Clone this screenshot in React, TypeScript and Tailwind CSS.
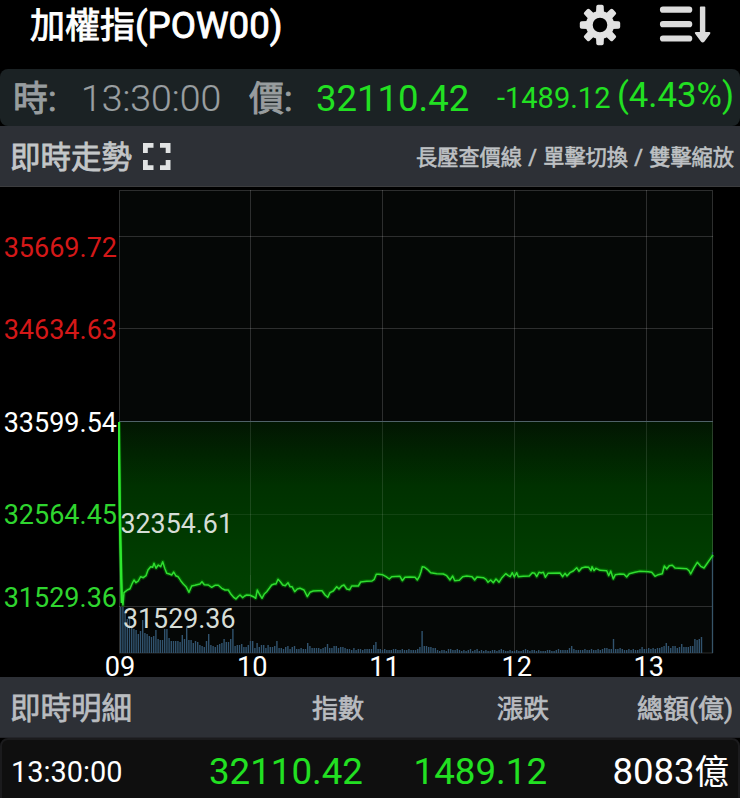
import React from 'react';

const CHART_LEFT = 119;
const CHART_RIGHT = 713;
const CHART_BOTTOM = 653;
const PREV_CLOSE_Y = 421.5;
const MINUTE_WIDTH = 2.2;

const hours = ['09', '10', '11', '12', '13'];

// price line, one block per part of the session, in thirds of a pixel from the origin
const priceParts = [
  {
    origin: [100, 410],
    points: [
      [57, 36], [59, 300], [63, 480], [66, 570], [69, 585], [72, 548], [82, 540],
      [90, 536], [97, 520], [102, 510], [108, 518], [115, 513], [122, 500],
      [130, 503], [138, 497], [144, 480], [152, 470], [158, 472], [162, 460],
      [168, 475], [175, 465], [182, 470], [188, 455], [194, 475], [200, 490],
      [208, 492], [215, 495], [221, 486], [227, 497], [234, 500], [242, 512],
      [250, 522], [258, 530], [267, 547], [275, 528], [285, 526], [300, 522],
      [306, 515], [313, 524], [325, 525], [335, 532], [345, 526], [355, 526],
      [365, 535], [375, 540], [385, 540], [393, 553], [402, 563], [408, 567],
      [414, 560], [420, 555], [428, 563], [434, 558], [440, 555], [450, 556],
      [460, 560], [467, 565], [472, 540], [478, 552], [486, 565], [493, 552],
      [500, 545], [508, 535], [515, 525], [523, 522], [528, 522], [534, 508],
      [541, 515], [548, 525], [556, 527], [564, 518], [570, 530], [576, 530],
      [584, 545], [592, 537], [600, 535], [612, 540], [622, 560], [630, 547],
      [640, 543], [655, 542],
    ],
  },
  {
    origin: [300, 530],
    points: [
      [66, 182], [75, 195], [83, 202], [90, 188], [100, 183], [110, 170],
      [117, 177], [125, 168], [132, 165], [140, 177], [149, 179], [155, 168],
      [165, 168], [175, 168], [182, 156], [200, 154], [216, 153], [223, 148],
      [229, 133], [236, 133], [247, 134], [258, 140], [268, 147], [275, 140],
      [300, 139], [307, 152], [315, 142], [330, 141], [345, 142], [352, 150],
      [358, 140], [363, 125], [367, 110], [374, 112], [382, 118], [392, 128],
      [410, 131], [430, 132], [440, 137], [450, 150], [458, 138], [464, 152],
      [478, 151], [488, 140], [500, 138], [516, 140], [524, 150], [531, 141],
      [550, 143], [558, 148], [564, 157], [572, 150], [580, 158], [588, 147],
      [597, 157],
    ],
  },
  {
    origin: [500, 530],
    points: [
      [6, 143], [17, 131], [25, 137], [31, 140], [37, 128], [43, 141],
      [50, 128], [55, 140], [70, 139], [88, 138], [97, 128], [104, 130],
      [110, 140], [117, 127], [124, 129], [130, 127], [136, 142], [144, 130],
      [180, 129], [188, 140], [195, 130], [201, 138], [210, 128], [220, 123],
      [230, 113], [237, 124], [245, 114], [256, 111], [266, 112], [273, 122],
      [276, 110], [282, 122], [288, 115], [300, 121], [320, 122], [326, 137],
      [332, 123], [340, 147], [346, 134], [360, 132], [372, 133], [380, 141],
      [388, 131], [405, 127], [420, 124], [445, 125], [455, 127], [465, 139],
      [475, 134], [487, 131], [493, 108], [500, 117], [508, 107], [517, 106],
      [525, 114], [560, 116], [567, 122], [572, 132], [582, 113], [592, 97],
      [602, 109], [612, 114], [622, 100], [632, 85], [639, 75],
    ],
  },
];

// volume per minute, as bar heights
const volumes = [
  46, 46, 40, 34, 36, 26, 24, 23, 19, 22, 33, 20, 19, 17, 16, 17, 23, 14, 13,
  13, 24, 24, 15, 12, 12, 12, 12, 11, 18, 14, 27, 13, 13, 10, 12, 11, 8, 7, 6,
  12, 19, 8, 7, 6, 8, 9, 10, 14, 11, 11, 14, 24, 7, 8, 8, 9, 6, 6, 8, 12, 12, 5,
  10, 6, 8, 8, 5, 8, 6, 6, 7, 12, 5, 5, 4, 6, 7, 4, 6, 7, 4, 4, 5, 4, 4, 10, 7,
  5, 5, 5, 5, 4, 5, 6, 9, 5, 5, 7, 7, 5, 6, 6, 5, 4, 4, 3, 5, 3, 4, 4, 3, 4, 4,
  4, 4, 8, 11, 4, 4, 3, 4, 3, 3, 3, 4, 4, 3, 3, 4, 3, 3, 4, 3, 3, 3, 4, 6, 22, 7,
  7, 6, 6, 5, 5, 3, 2, 3, 3, 2, 4, 4, 3, 3, 4, 3, 2, 3, 2, 3, 4, 2, 3, 4, 2, 3,
  2, 3, 2, 2, 3, 3, 2, 3, 4, 3, 2, 2, 3, 2, 2, 3, 2, 2, 3, 4, 3, 2, 3, 3, 2, 3,
  2, 2, 2, 3, 3, 2, 2, 3, 4, 3, 3, 3, 3, 5, 7, 4, 3, 3, 3, 3, 4, 3, 3, 4, 3, 3,
  4, 3, 4, 5, 5, 4, 4, 14, 4, 4, 5, 4, 3, 3, 4, 3, 4, 3, 3, 4, 6, 4, 4, 5, 4, 5,
  4, 5, 5, 6, 7, 10, 7, 5, 7, 7, 5, 6, 9, 6, 6, 6, 7, 7, 14, 13, 14, 16,
];

const prices = priceParts.flatMap(part =>
  part.points.map(([x, y]) => [
    part.origin[0] + x / 3,
    part.origin[1] + y / 3,
  ]),
);
const line = prices
  .map(([x, y]) => `${x.toFixed(1)},${y.toFixed(1)}`)
  .join(' ');
const area = `${CHART_LEFT},${PREV_CLOSE_Y} ${line} ${CHART_RIGHT},${PREV_CLOSE_Y}`;

const GearIcon: React.FC = () => (
  <svg className="size-[42px]" viewBox="-21 -21 42 42" fill="#e2e2e2">
    <circle r="10.7" fill="none" stroke="#e2e2e2" strokeWidth="6.8" />
    {[0, 45, 90, 135, 180, 225, 270, 315].map(angle => (
      <path
        key={angle}
        d="M-4 -12 L-3.7 -18.4 Q-3.6 -20.2 -2 -20.2 H2 Q3.6 -20.2 3.7 -18.4 L4 -12 Z"
        transform={`rotate(${angle})`}
      />
    ))}
  </svg>
);

const SortIcon: React.FC = () => (
  <svg className="h-[42px] w-[52px]" viewBox="0 0 52 42" fill="#dcdcdc">
    <path
      d="M4 5.7 H30.2 M4 20.2 H30.2 M4 34.5 H30.2"
      stroke="#dcdcdc"
      strokeWidth="6.2"
      strokeLinecap="round"
    />
    <path d="M40.9 3.2 Q40.9 2.5 41.7 2.5 H45.5 Q46.3 2.5 46.3 3.3 V28 H50.3 Q52 28.3 51.2 29.8 L45.5 37.4 Q43.7 39.4 41.9 37.4 L36.1 29.8 Q35.1 28.3 36.9 28 H40.9 Z" />
  </svg>
);

const FullscreenIcon: React.FC = () => (
  <svg
    className="size-[29px]"
    viewBox="0 0 29 29"
    fill="none"
    stroke="#e1e3e4"
    strokeWidth="4.8"
  >
    <path d="M3.4 11 V3.4 H11.5 M18 3.4 H26.1 V11 M26.1 18 V25.6 H18 M11.5 25.6 H3.4 V18" />
  </svg>
);

const Chart: React.FC = () => (
  <svg
    className="col-start-2 row-start-1 h-[467px] w-[622px]"
    viewBox="118 187 622 467"
  >
    <defs>
      <linearGradient id="fall" x1="0" y1="0" x2="0" y2="1">
        <stop offset="0" stopColor="#021602" />
        <stop offset="0.35" stopColor="#003100" />
        <stop offset="0.75" stopColor="#003d00" />
        <stop offset="1" stopColor="#004200" />
      </linearGradient>
    </defs>
    <rect x="119" y="190" width="594" height="463" fill="#050706" />
    <polygon points={area} fill="url(#fall)" />
    <g fill="none" stroke="#ffffff" strokeOpacity="0.16" strokeWidth="1">
      <rect x="119.5" y="190.5" width="593" height="462.5" />
      <path d="M119 236.5 H713 M119 328.5 H713 M119 606.5 H713" />
      <path d="M119 514.5 H713" strokeOpacity="0.07" />
      {[250.5, 382.5, 514.5, 646.5].map(x => (
        <g key={x}>
          <path d={`M${x} 190 V421 M${x} 575 V653`} />
          <path d={`M${x} 421 V575`} strokeOpacity="0.11" />
        </g>
      ))}
    </g>
    <path d="M119 421.5 H713" stroke="#4f6268" />
    <g fill="#31536e">
      {volumes.map((v, i) => (
        <rect
          key={i}
          x={120 + i * MINUTE_WIDTH}
          y={CHART_BOTTOM - v}
          width="1.4"
          height={v}
        />
      ))}
    </g>
    <path d="M712.5 552 V653" stroke="#365468" strokeWidth="1.3" />
    <polyline
      points={line}
      fill="none"
      stroke="#00b800"
      strokeOpacity="0.3"
      strokeWidth="4"
      strokeLinejoin="round"
    />
    <polyline
      points={line}
      fill="none"
      stroke="#30dc30"
      strokeWidth="1.5"
      strokeLinejoin="round"
    />
    <path
      d="M118.8 422 L119.8 514 L121.8 603"
      fill="none"
      stroke="#2ee82e"
      strokeWidth="2.4"
    />
  </svg>
);

const App: React.FC = () => {
  return (
    <main className="h-[798px] w-[740px] overflow-hidden bg-black font-['Roboto','Noto_Sans_CJK_TC',sans-serif] whitespace-nowrap">
      <header className="flex h-[69px] items-start pl-[30px]">
        <h1 className="mt-[5px] text-[35px] leading-[42px] text-white [-webkit-text-stroke:0.9px]">
          加權指<span className="text-[36.7px]">(POW00)</span>
        </h1>
        <div className="mt-[3.5px] mr-[29px] ml-auto flex gap-[38px]">
          <GearIcon />
          <SortIcon />
        </div>
      </header>

      <section className="flex h-[57px] items-center rounded-[8px] bg-[#1b2224] text-[36.5px] leading-[57px]">
        <span className="mt-1 w-[67px] pl-[13px] text-[35px] text-[#989d9f] [-webkit-text-stroke:0.9px]">
          時:
        </span>
        <span className="mt-0.5 w-[182px] pl-[14px] text-[37.4px] font-light text-[#9a9fa1] [-webkit-text-stroke:0.2px]">
          13:30:00
        </span>
        <span className="mt-1 w-[67px] text-[35px] text-[#989d9f] [-webkit-text-stroke:0.9px]">
          價:
        </span>
        <span className="mt-px w-[181px] text-[#22e022]">32110.42</span>
        <span className="mt-0.5 w-[120px] text-[29px] text-[#22e022]">
          -1489.12
        </span>
        <span className="-mt-1 text-[34.7px] text-[#22e022]">(4.43%)</span>
      </section>

      <section className="flex h-[61px] items-center justify-between border-b border-[#3c3d3f] bg-[#2d3036] pr-[6px] pl-[10px]">
        <div className="flex items-center gap-[10px]">
          <h2 className="mt-[3px] text-[30.5px] text-[#c3c6c8] [-webkit-text-stroke:0.8px]">
            即時走勢
          </h2>
          <FullscreenIcon />
        </div>
        <p className="mt-[3px] text-[21.2px] text-[#bec1c4] [-webkit-text-stroke:0.6px] [word-spacing:1px]">
          長壓查價線 / 單擊切換 / 雙擊縮放
        </p>
      </section>

      <section className="grid h-[490px] grid-cols-[118px_622px] grid-rows-[467px_23px]">
        <div className="pr-px text-right text-[27px] leading-[32px]">
          <p className="mt-[45px] text-[#d41818]">35669.72</p>
          <p className="mt-[50px] text-[#d41818]">34634.63</p>
          <p className="mt-[61px] text-white">33599.54</p>
          <p className="mt-[60px] text-[#2fd52f]">32564.45</p>
          <p className="mt-[51px] text-[#2fd52f]">31529.36</p>
        </div>
        <Chart />
        <div className="z-10 col-start-2 row-start-1 text-[26.8px] leading-[32px] text-[#d6ddd6]">
          <p className="mt-[321px] ml-[2.5px]">32354.61</p>
          <p className="mt-[63px] ml-[5px]">31529.36</p>
        </div>
        <div className="col-start-2 -ml-[64px] flex text-[27.2px] leading-[27px] text-white">
          {hours.map(hour => (
            <span key={hour} className="w-[132.2px] text-center">
              {hour}
            </span>
          ))}
        </div>
      </section>

      <section className="grid h-[61px] grid-cols-[200px_164px_185px_184px] items-center border-b border-[#24252a] bg-[#2d3036] pt-1 text-right text-[26px] text-[#b9bcc0] [-webkit-text-stroke:0.7px]">
        <h2 className="pl-[10px] text-left text-[30.5px]">即時明細</h2>
        <span>指數</span>
        <span>漲跌</span>
        <span>總額(億)</span>
      </section>

      <section className="grid h-[68px] grid-cols-[200px_164px_184px_182px] items-center rounded-[8px] border-2 border-[#1b1b1d] bg-[#0f0f0f] text-right text-[36.7px] leading-[64px]">
        <span className="pb-1 pl-[9px] text-left text-[28.9px] text-white">
          13:30:00
        </span>
        <span className="pr-[3px] pb-1 text-[#22e022]">32110.42</span>
        <span className="pr-[3px] pb-1 text-[#22e022]">1489.12</span>
        <span className="pr-[3px] pb-1 text-[34.5px] text-white">
          <span className="text-[36.5px]">8083</span>億
        </span>
      </section>
    </main>
  );
};

export default App;
